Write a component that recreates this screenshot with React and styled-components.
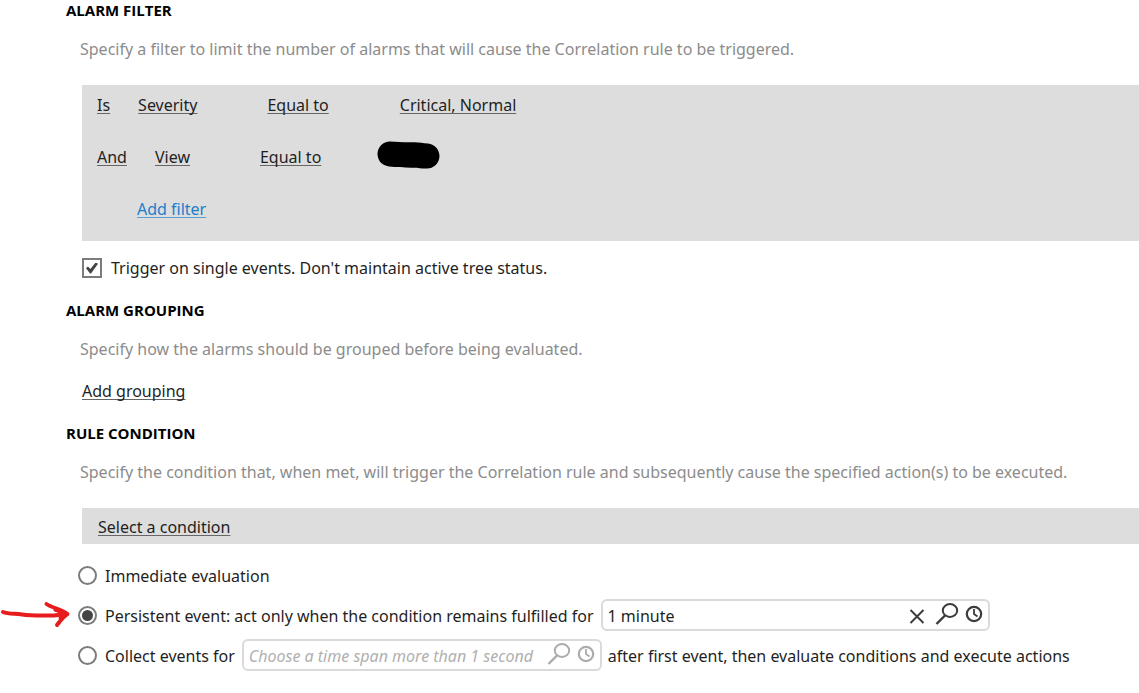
import React, { useState } from 'react';
import styled, { createGlobalStyle, css } from 'styled-components';

const GlobalStyle = createGlobalStyle`
  * {
    box-sizing: border-box;
  }

  body {
    margin: 0;
    background-color: #ffffff;
    color: #1f1f1f;
    font-family: 'Noto Sans', 'Open Sans', sans-serif;
    font-size: 16px;
    line-height: 24px;
    overflow-x: hidden;
  }
`;

const Page = styled.main`
  padding-left: 66px;
`;

const Section = styled.section`
  margin-bottom: 20px;
`;

const Title = styled.h2`
  margin: 0 0 17px;
  color: #000000;
  font-family: 'Open Sans', sans-serif;
  font-size: 15px;
  font-weight: bold;
  line-height: 20px;
`;

const Description = styled.p`
  margin: 0 0 24px 14px;
  color: #8c8c8c;

  ${({ $tight }) =>
    $tight &&
    css`
      margin-bottom: 18px;
    `}
`;

const Panel = styled.div`
  margin-left: 16px;
  background-color: #dddddd;
  padding: ${({ $slim }) => ($slim ? '7px 16px 5px' : '8px 15px 20px')};
`;

const FilterList = styled.div`
  display: flex;
  flex-direction: column;
  gap: 28px;
`;

const FilterRow = styled.div`
  display: flex;
  align-items: center;
  height: 24px;
  padding-left: ${({ $indent }) => ($indent ? '40px' : '0')};
`;

const FieldGroup = styled.div`
  display: flex;
  gap: 28px;
  margin-right: 70px;
`;

const Value = styled.div`
  display: flex;
  margin-left: ${({ $near }) => ($near ? '56px' : '71px')};
`;

const TextLink = styled.a`
  color: ${({ $accent }) => ($accent ? '#1b7fcc' : '#1f1f1f')};
  text-decoration: underline;
  text-decoration-color: ${({ $accent }) => ($accent ? '#5a9fd4' : '#666666')};
  text-decoration-thickness: 1px;
  text-decoration-skip-ink: none;
  text-underline-offset: 2px;
`;

const CheckRow = styled.label`
  display: flex;
  align-items: center;
  gap: 9px;
  margin: 15px 0 0 16px;
`;

const Checkbox = styled.input`
  appearance: none;
  display: grid;
  place-items: center;
  width: 20px;
  height: 20px;
  margin: 0;
  border: 2px solid #7c7c7c;
  background-color: #ffffff;

  &:checked::before {
    content: '';
    width: 12px;
    height: 11px;
    background-color: #444444;
    clip-path: polygon(0 52%, 16% 36%, 37% 60%, 80% 0, 100% 12%, 42% 100%, 34% 100%);
  }
`;

const GroupingLink = styled.div`
  margin-left: 16px;
`;

const Options = styled.div`
  display: flex;
  flex-direction: column;
  gap: 8px;
  margin: 15px 0 0 12px;
`;

const OptionRow = styled.div`
  position: relative;
  display: flex;
  align-items: center;
  height: 32px;
  white-space: nowrap;
`;

const OptionText = styled.label`
  padding-top: 2px;
`;

const Radio = styled.input`
  appearance: none;
  display: grid;
  place-items: center;
  flex: none;
  width: 19px;
  height: 19px;
  margin: 0 8px 0 0;
  border: 2px solid #7c7c7c;
  border-radius: 50%;
  background-color: #ffffff;

  &:checked::before {
    content: '';
    width: 11px;
    height: 11px;
    border-radius: 50%;
    background-color: #444444;
  }
`;

const TimeBox = styled.div`
  display: flex;
  align-items: center;
  flex: 0 1 ${({ $wide }) => ($wide ? '389px' : '360px')};
  height: 32px;
  margin: 0 6px 0 7px;
  padding: 0 5px;
  border: 2px solid #dadada;
  border-radius: 6px;
  background-color: #ffffff;
  color: ${({ $muted }) => ($muted ? '#acacac' : '#3c3c3c')};
`;

const TimeInput = styled.input`
  flex: 1;
  min-width: 0;
  padding: 2px 0 0;
  border: 0;
  outline: 0;
  background: transparent;
  color: #1f1f1f;
  font: inherit;

  &::placeholder {
    color: #b0b0b0;
    font-style: italic;
    opacity: 1;
  }
`;

const IconButton = styled.button`
  display: flex;
  flex: none;
  margin: 0 0 0 ${({ $gap }) => $gap || 0}px;
  padding: 0;
  border: 0;
  background: none;
  color: inherit;
`;

const Arrow = styled.svg`
  position: absolute;
  top: 0;
  left: -78px;
`;

const ClearIcon = () => (
  <svg width="16" height="24" viewBox="0 0 16 24" fill="none" stroke="currentColor" strokeWidth="2">
    <path d="M1.5 7 14.5 20M14.5 7 1.5 20" />
  </svg>
);

const SearchIcon = () => (
  <svg width="24" height="24" viewBox="0 0 24 24" fill="none" stroke="currentColor" strokeWidth="2">
    <ellipse cx="15" cy="7.5" rx="7.2" ry="6.5" />
    <path d="M10 12.5 1.5 21" strokeWidth="2.4" />
  </svg>
);

const ClockIcon = () => (
  <svg width="18" height="24" viewBox="0 0 18 24" fill="none" stroke="currentColor" strokeWidth="2.2">
    <circle cx="9" cy="11" r="7.2" />
    <path d="M9 6V11L12.500 13.500" strokeWidth="1.8" />
  </svg>
);

const Redaction = () => (
  <svg width="63" height="32" viewBox="0 0 63 32" role="img" aria-label="Hidden view">
    <path d="M13 0.5C21 1 27 1.5 35 1.3C42 1 45 2 51 2.5C58 3.5 62.5 8.5 62.5 15.5C62 23 56 28 49 27.5C43 27.5 41 26.5 34 26.8C27 26.5 20 26.5 12 25.5C4 24 0.5 19 0.5 12.5C1 5.5 6 0.5 13 0.5Z" />
  </svg>
);

const PointerArrow = () => (
  <Arrow width="72" height="32" viewBox="0 0 72 32" fill="none" stroke="#e81c1c" strokeLinecap="round" strokeLinejoin="round" aria-hidden="true">
    <path d="M3 13C8 15 14 14.5 22 15.5C32 17 43 16.5 54 16.5L66 15" strokeWidth="4" />
    <path d="M46.500 5C52 9 61 10 67.500 15C64 17 60 22 57 26" strokeWidth="4" />
    <path d="M55 11 66 15 60 19" strokeWidth="3" />
  </Arrow>
);

const filters = [
  { operator: 'Is', field: 'Severity', comparison: 'Equal to', value: 'Critical, Normal' },
  { operator: 'And', field: 'View', comparison: 'Equal to', value: null },
];

const App = () => {
  const [single, setSingle] = useState(true);
  const [mode, setMode] = useState('persistent');
  const [duration, setDuration] = useState('1 minute');
  const [span, setSpan] = useState('');

  const radioProps = (value) => ({
    type: 'radio',
    name: 'evaluation',
    id: value,
    checked: mode === value,
    onChange: () => setMode(value),
  });

  return (
    <>
      <GlobalStyle />
      <Page>
        <Section>
          <Title>ALARM FILTER</Title>
          <Description>
            Specify a filter to limit the number of alarms that will cause the Correlation rule to be triggered.
          </Description>
          <Panel>
            <FilterList>
              {filters.map(({ operator, field, comparison, value }) => (
                <FilterRow key={operator}>
                  <FieldGroup>
                    <TextLink href="#operator">{operator}</TextLink>
                    <TextLink href="#field">{field}</TextLink>
                  </FieldGroup>
                  <TextLink href="#comparison">{comparison}</TextLink>
                  <Value $near={!value}>
                    {value ? <TextLink href="#value">{value}</TextLink> : <Redaction />}
                  </Value>
                </FilterRow>
              ))}
              <FilterRow $indent>
                <TextLink href="#add-filter" $accent>Add filter</TextLink>
              </FilterRow>
            </FilterList>
          </Panel>
          <CheckRow>
            <Checkbox type="checkbox" checked={single} onChange={(e) => setSingle(e.target.checked)} />
            Trigger on single events. Don't maintain active tree status.
          </CheckRow>
        </Section>

        <Section>
          <Title>ALARM GROUPING</Title>
          <Description $tight>Specify how the alarms should be grouped before being evaluated.</Description>
          <GroupingLink>
            <TextLink href="#add-grouping">Add grouping</TextLink>
          </GroupingLink>
        </Section>

        <Section>
          <Title>RULE CONDITION</Title>
          <Description>
            Specify the condition that, when met, will trigger the Correlation rule and subsequently cause the specified action(s) to be executed.
          </Description>
          <Panel $slim>
            <TextLink href="#condition">Select a condition</TextLink>
          </Panel>
          <Options>
            <OptionRow>
              <Radio {...radioProps('immediate')} />
              <OptionText htmlFor="immediate">Immediate evaluation</OptionText>
            </OptionRow>
            <OptionRow>
              <PointerArrow />
              <Radio {...radioProps('persistent')} />
              <OptionText htmlFor="persistent">
                Persistent event: act only when the condition remains fulfilled for
              </OptionText>
              <TimeBox $wide>
                <TimeInput aria-label="Duration" value={duration} onChange={(e) => setDuration(e.target.value)} />
                <IconButton type="button" aria-label="Clear" onClick={() => setDuration('')}><ClearIcon /></IconButton>
                <IconButton type="button" aria-label="Search duration" $gap={10}><SearchIcon /></IconButton>
                <IconButton type="button" aria-label="Pick duration" $gap={6}><ClockIcon /></IconButton>
              </TimeBox>
            </OptionRow>
            <OptionRow>
              <Radio {...radioProps('collect')} />
              <OptionText htmlFor="collect">Collect events for</OptionText>
              <TimeBox $muted>
                <TimeInput
                  aria-label="Time span"
                  placeholder="Choose a time span more than 1 second"
                  value={span}
                  onChange={(e) => setSpan(e.target.value)}
                />
                <IconButton type="button" aria-label="Search time span"><SearchIcon /></IconButton>
                <IconButton type="button" aria-label="Pick time span" $gap={6}><ClockIcon /></IconButton>
              </TimeBox>
              <OptionText as="span">after first event, then evaluate conditions and execute actions</OptionText>
            </OptionRow>
          </Options>
        </Section>
      </Page>
    </>
  );
};

export default App;
